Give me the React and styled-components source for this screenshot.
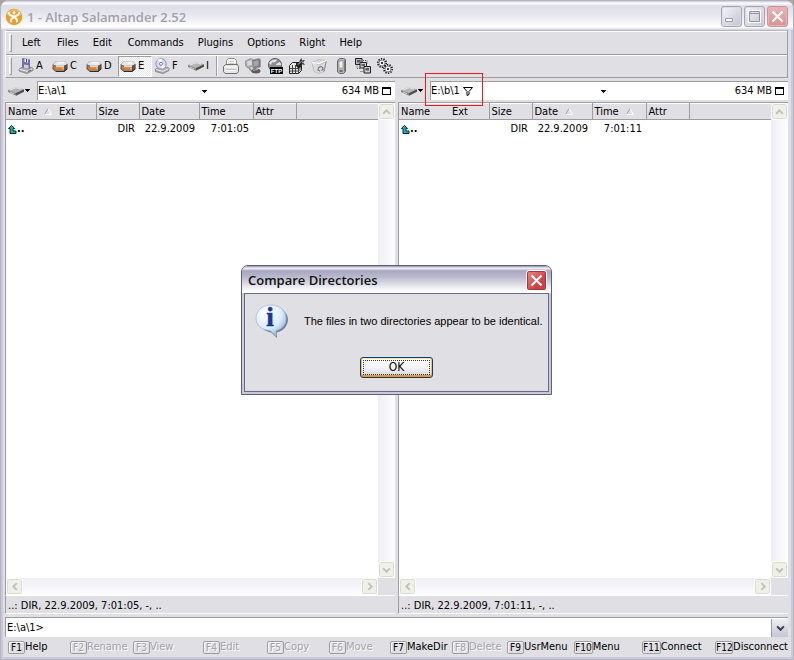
import styled, { createGlobalStyle, css } from "styled-components";

/* Silver theme palette and base type */
const GlobalStyles = createGlobalStyle`
	:root {
		--face: #E0DFE3;
		--shadow: #9D9DA1;
		--light: #FFFFFF;
		--frame: #C9C9D8;
		--disabled: #A3A2A8;
		--text: #000000;
		--ui-font: "DejaVu Sans Condensed", "DejaVu Sans", sans-serif;
		--title-font: "Open Sans", "Noto Sans", sans-serif;
	}

	* {
		box-sizing: border-box;
	}

	body {
		margin: 0;
		background: #A9A49E;
	}

	body, button, input {
		font-family: var(--ui-font);
		font-size: 11px;
		line-height: 16px;
		color: var(--text);
	}

	button {
		border: 0;
		padding: 0;
		background: none;
	}

	svg {
		display: block;
		flex: none;
	}
`;

/* Window frame */
const Window = styled.div`
	display: flex;
	flex-direction: column;
	min-height: 100vh;
	padding: 0 5px 2px 4px;
	background: var(--face);
	border: 1px solid #B4B3C2;
	border-radius: 8px 8px 0 0;
	box-shadow: inset 2px 0 0 var(--frame), inset -2px 0 0 var(--frame), inset 0 -2px 0 var(--frame);
`;

const TitleBar = styled.header`
	display: flex;
	align-items: center;
	gap: 2px;
	height: 29px;
	margin: 0 -5px 0 -4px;
	padding: 2px 5px 0 4px;
	border-radius: 7px 7px 0 0;
	background: linear-gradient(#CBCBDA, #FFFFFF 8%, #DEDEE9 16%, #E6E6EF 45%, #FFFFFF 90%, #D0D0DC);
`;

const Title = styled.h1`
	flex: 1;
	margin: 0 0 0 2px;
	font: 600 13px/20px var(--title-font);
	color: #A2A1A6;
`;

const CaptionButton = styled.button`
	display: grid;
	place-items: center;
	width: 21px;
	height: 21px;
	border: 1px solid ${({ $close }) => ($close ? "#C9939C" : "#A5A5B5")};
	border-radius: 3px;
	background: ${({ $close }) =>
		$close ? "linear-gradient(#E9B5B5, #D99292)" : "linear-gradient(135deg, #F4F4F8, #C3C3D0)"};
	box-shadow: inset 0 0 0 1px ${({ $close }) => ($close ? "#E7B4B5" : "#DCDCE6")};
`;

/* Menu and toolbar */
const Rebar = styled.div`
	border: 1px solid var(--shadow);
	border-left-color: var(--light);
	border-top-color: #B5B5BD;
`;

const Band = styled.div`
	display: flex;
	align-items: center;
	height: 23px;
	padding-left: 3px;
	border-top: 1px solid var(--light);

	& + & {
		border-top: 1px solid var(--shadow);
		box-shadow: inset 0 1px 0 var(--light);
	}
`;

const Gripper = styled.span`
	width: 3px;
	height: 18px;
	border: 1px solid var(--shadow);
	border-color: var(--light) var(--shadow) var(--shadow) var(--light);
`;

const MenuBar = styled.nav`
	display: flex;
	gap: 14px;
	padding-left: 10px;

	button {
		min-width: 21px;
		text-align: left;
	}
`;

const Drives = styled.div`
	display: flex;
	padding-left: 4px;
`;

const DriveButton = styled.button`
	display: flex;
	align-items: center;
	gap: 2px;
	width: ${({ $narrow }) => ($narrow ? 30 : 34)}px;
	height: 21px;
	padding-left: 1px;
	border: 1px solid transparent;
	${({ $pressed }) =>
		$pressed &&
		css`
			border-color: var(--shadow) var(--light) var(--light) var(--shadow);
			background: repeating-conic-gradient(#FFFFFF 0 25%, #E6E5E9 0 50%) 0 0 / 2px 2px;
		`}
`;

const Separator = styled.span`
	width: 2px;
	height: 20px;
	margin-right: 2px;
	border-left: 1px solid var(--shadow);
	border-right: 1px solid var(--light);
`;

const ToolButton = styled.button`
	display: grid;
	place-items: center;
	width: 22px;
	height: 21px;
`;

/* Panels */
const Panels = styled.main`
	flex: 1;
	display: grid;
	grid-template-columns: minmax(0, 1fr) minmax(0, 1fr);
	gap: 3px;
	margin-top: 3px;
`;

const Panel = styled.section`
	display: flex;
	flex-direction: column;
	min-width: 0;
`;

const PathBar = styled.div`
	display: flex;
	align-items: center;
	height: 19px;
`;

const DriveMenu = styled.button`
	display: flex;
	align-items: center;
	gap: 1px;
	width: 32px;
	padding-left: 3px;
`;

const PathField = styled.div`
	position: relative;
	flex: 1;
	display: flex;
	align-items: center;
	gap: 3px;
	height: 19px;
	padding-right: 4px;
	border-top: 1px solid var(--shadow);
	border-left: 1px solid var(--shadow);
	background: var(--light);
`;

const PathMenu = styled.button`
	display: grid;
	place-items: center;
	flex: 1;
	height: 16px;
`;

const Highlight = styled.span`
	position: absolute;
	left: -6px;
	top: -9px;
	width: 58px;
	height: 33px;
	border: 1px solid #F01818;
	pointer-events: none;
`;

const ListFrame = styled.div`
	flex: 1;
	display: grid;
	grid-template-columns: minmax(0, 1fr) 17px;
	grid-template-rows: 1fr 17px;
	margin-top: 2px;
	border-top: 1px solid var(--shadow);
	border-left: 1px solid var(--shadow);
	background: var(--face);
`;

const ListArea = styled.div`
	background: var(--light);
`;

const FileTable = styled.table`
	width: 100%;
	table-layout: fixed;
	border-collapse: collapse;

	thead tr {
		height: 17px;
		background: var(--face);
		box-shadow: inset 0 1px 0 var(--light), inset 0 -1px 0 var(--shadow);
	}

	th {
		padding: 0 0 0 2px;
		border-right: 1px solid var(--shadow);
		font-weight: normal;
		text-align: left;
	}

	th:last-child {
		border-right: 0;
	}

	td {
		height: 18px;
		padding: 0 4px 0 2px;
		text-align: right;
		white-space: nowrap;
	}

	td:first-child {
		text-align: left;
	}
`;

const Column = styled.col`
	width: ${({ $width }) => ($width ? `${$width}px` : "auto")};
`;

const HeadLabel = styled.span`
	display: inline-flex;
	align-items: center;
	gap: 7px;
	min-width: ${({ $wide }) => ($wide ? 51 : 0)}px;
	vertical-align: top;
`;

const UpDir = styled.span`
	display: flex;
	align-items: center;
	font-weight: bold;
`;

const ScrollBar = styled.div`
	display: flex;
	flex-direction: ${({ $vertical }) => ($vertical ? "column" : "row")};
	justify-content: space-between;
	background: linear-gradient(${({ $vertical }) => ($vertical ? "to right" : "to bottom")}, #EEEEF4, #FDFDFE);
`;

const ScrollButton = styled.button`
	display: grid;
	place-items: center;
	width: 17px;
	height: 17px;
	border: 1px solid #FFFFFF;
	border-radius: 3px;
	background: #F0F0EA;
	box-shadow: inset 0 0 0 1px #DCDCCE;
`;

const StatusLine = styled.div`
	height: 19px;
	padding: 2px 2px 0;
	border-top: 1px solid var(--light);
	border-bottom: 1px solid var(--light);
	border-left: 1px solid var(--shadow);
`;

/* Command line and function keys */
const CommandLine = styled.form`
	display: flex;
	align-items: center;
	height: 20px;
	margin-top: 3px;
	padding-left: 1px;
	border-top: 1px solid var(--shadow);
	border-left: 1px solid var(--shadow);
	background: var(--light);
`;

const CommandInput = styled.input`
	flex: 1;
	min-width: 0;
	border: 0;
	padding: 0 2px;
	outline: 0;
	background: none;
`;

const ComboButton = styled.button`
	display: grid;
	place-items: center;
	width: 17px;
	height: 18px;
	border-left: 1px solid var(--shadow);
	background: linear-gradient(#EEEEF4, #C5C5D4);
`;

const KeyBar = styled.footer`
	display: grid;
	grid-template-columns: 62fr 63fr 70fr 64fr 62fr 61fr 62fr 55fr 67fr 68fr 73fr 73fr;
	align-items: center;
	height: 20px;
	padding-left: 3px;
`;

const KeyButton = styled.button`
	display: flex;
	align-items: center;
	min-width: 0;
	white-space: nowrap;

	&:disabled {
		color: var(--disabled);
		text-shadow: 1px 1px 0 var(--light);
	}
`;

const KeyCap = styled.kbd`
	min-width: 17px;
	height: 13px;
	border: 1px solid var(--shadow);
	border-radius: 2px;
	box-shadow: inset 1px 1px 0 var(--light);
	font: 10px/11px var(--ui-font);
	text-align: center;
`;

/* Message box */
const Overlay = styled.div`
	position: fixed;
	inset: 0;
	display: grid;
	place-items: center;
	padding: 0 1px 1px 0;
`;

const Dialog = styled.section`
	width: 311px;
	padding: 0 2px 2px;
	border: 1px solid #5E5D80;
	border-radius: 7px 7px 0 0;
	background: #C9C9DA;
`;

const DialogTitle = styled.header`
	display: flex;
	align-items: center;
	justify-content: space-between;
	height: 27px;
	margin: 0 -2px;
	padding: 2px 4px 0 6px;
	border-radius: 6px 6px 0 0;
	background: linear-gradient(#8E8EA9, #F5F5FA 8%, #A6A6C0 18%, #B9B9CC 40%, #F4F4F8 85%, #FFFFFF);

	h2 {
		margin: 0;
		font: 600 13px/20px var(--title-font);
		color: #0E1010;
	}
`;

const DialogClose = styled(CaptionButton)`
	border-color: #FFFFFF;
	background: linear-gradient(135deg, #E58B84, #CC3F42 70%);
	box-shadow: inset 0 0 0 1px #A9333D;
`;

const DialogBody = styled.div`
	display: flex;
	flex-direction: column;
	align-items: center;
	border: 1px solid #6A6988;
	background: var(--face);
	padding: 9px 9px 13px;
`;

const Message = styled.div`
	display: flex;
	align-items: center;
	gap: 14px;
	align-self: stretch;
	height: 36px;
	margin-bottom: 18px;
	font-family: "Liberation Sans", Arial, sans-serif;

	p {
		margin: 0;
		white-space: nowrap;
	}
`;

const OkButton = styled.button`
	width: 73px;
	height: 21px;
	border: 1px solid #123C6B;
	border-radius: 3px;
	background: linear-gradient(#FFFFFF, #F4F4F8 50%, #D2D2E2);
	box-shadow: inset 0 1px 0 #FDE3A4, inset 0 -2px 0 #E79A1D, inset 1px 0 0 #F5BE56, inset -1px 0 0 #F5BE56;
	font-size: 12px;
	line-height: 17px;
	outline: 1px dotted #33334A;
	outline-offset: -4px;
`;

/* Icons */
const Icon = ({ size = 16, children }) => (
	<svg width={size} height={size} viewBox="0 0 16 16" fill="none" aria-hidden="true">
		{children}
	</svg>
);

const AppIcon = () => (
	<Icon size={18}>
		<circle cx="8" cy="8" r="7.3" fill="#EE9A28" />
		<path d="M2 6a6.5 6.5 0 0 1 12 0" stroke="#F9C05C" strokeWidth="1.4" />
		<path d="M3.5 4.5C3.5 6.5 5.500 7 8 7.500 10.500 7 12.500 6.500 12.500 4.500M8 8.500C5.500 9 5 10.500 5.500 12M8 8.500C10.500 9 11 10.500 10.500 12" stroke="#FFF" strokeWidth="1.8" strokeLinecap="round" />
		<circle cx="8" cy="4.3" r="1.4" fill="#FFF" />
	</Icon>
);

const FloppyIcon = () => (
	<Icon>
		<path d="M1 11l5-3 9 2v2.5L9 15.5 1 13z" fill="#A9A9AD" stroke="#727276" strokeWidth=".7" />
		<path d="M1.5 11.3l7.5 2 5.5-2.8" stroke="#F2F2F2" />
		<path d="M4 .5L5.500 0 12 1.500V11L4 9.500z" fill="#6F70AC" />
		<path d="M6.500 .5L10 1.300v3.200L6.500 4z" fill="#ECECF8" />
		<path d="M6 6.500l4.500 .8v3.200L6 9.700z" fill="#CFCFE0" />
		<path d="M8.500 1v3" stroke="#45457C" />
		<path d="M10 13.500l3-1.500" stroke="#555" />
	</Icon>
);

const DiskIcon = () => (
	<Icon>
		<path d="M.5 6.500L4 3h9l2.500 3v5L12 14H4L.5 11z" fill="#8E8A86" />
		<path d="M1 6.300L4.300 3.300H13L15.200 6 12 7.800H4z" fill="#E6E6E6" />
		<path d="M12 7.800L15.500 6v5L12 14z" fill="#55524F" />
		<path d="M1 6.500l3 1.300V14L.5 11z" fill="#6E6A67" />
		<path d="M4 8h8v1.500H4z" fill="#F4D3B0" />
		<path d="M4 9.500h8V12H4z" fill="#DA7F2E" />
		<path d="M2 8l2 1v3.500L2 11z" fill="#C87A3A" />
		<path d="M4 13.500h8l3-2.500" stroke="#2E2C2A" />
		<path d="M6 4.800h6" stroke="#FFF" />
		<path d="M10.500 10.500h1" stroke="#FFF2DC" strokeWidth="1.5" />
	</Icon>
);

const CdIcon = () => (
	<Icon>
		<path d="M1.500 11l5-3 8.500 2v2.500l-6 3-7.500-2z" fill="#A9A9AD" stroke="#727276" strokeWidth=".7" />
		<path d="M2 11.500l7 1.800 5.500-2.500" stroke="#F3F3F3" />
		<circle cx="7" cy="5.8" r="5.2" fill="#D4D9EF" stroke="#8E92AC" />
		<path d="M7 5.800L3.500 2A5 5 0 0 1 8 .8zM7 5.800l4.500 2.400A5 5 0 0 1 8 10.800z" fill="#FFF" />
		<circle cx="7" cy="5.8" r="1.5" fill="#FFF" stroke="#777C9D" />
	</Icon>
);

const RemovableIcon = () => (
	<Icon>
		<path d="M0 7l8-3 8 2.300L8 10z" fill="#B4B4B4" />
		<path d="M0 7v2l8 3.800V10z" fill="#858585" />
		<path d="M8 10l8-3.700v2.500l-8 4z" fill="#4E4E4E" />
		<path d="M2 7l6-2.300L13 6" stroke="#E9E9E9" />
		<path d="M2 9l4 1.800" stroke="#D5D5D5" />
	</Icon>
);

const PrinterIcon = () => (
	<Icon>
		<path d="M3.500 7.500v-5l2-2h6l2 2v5" fill="#F7F7F7" stroke="#8C8C8C" />
		<path d="M.5 8.500l2-2h12l1 2v5l-1.500 2h-12l-1.500-2z" fill="#E4E4E4" stroke="#6F6F6F" />
		<path d="M1.500 9h13M3 12.500h10" stroke="#FFF" />
		<path d="M3 11.500h10" stroke="#BDBDBD" />
		<path d="M6 3.500h5M5.500 5.500h6" stroke="#C9C9C9" />
	</Icon>
);

const NetworkIcon = () => (
	<Icon>
		<path d="M.5 3l5-2.500 3 1.500v6L3 10 .5 8z" fill="#A9A9A9" stroke="#8A8A8A" strokeWidth=".7" />
		<path d="M2 3.500l5-1.700v5L2.500 8z" fill="#D9D9D9" />
		<path d="M7 2l7-1.500 1.500 1V9L8 10.500z" fill="#7A7A7A" stroke="#999" strokeWidth=".7" />
		<path d="M8.500 3.300l5-1.200V7.500l-5 1.200z" fill="#A5A5A5" />
		<path d="M4 10l3 3.500h3V10" stroke="#8A8A8A" strokeWidth="1.5" />
		<ellipse cx="11" cy="13" rx="4.5" ry="2.5" fill="#5D5D5D" />
		<path d="M8 12.300l5-.8" stroke="#B5B5B5" />
	</Icon>
);

const FtpIcon = () => (
	<Icon>
		<circle cx="8" cy="7" r="6.6" fill="#8E8E8E" stroke="#4B4B4B" strokeWidth=".8" />
		<path d="M2 5c2-3 5-4 8-3.500L8.500 4 5 4.500 4 7zM9 6l4-2 1.500 3H9z" fill="#E3E3E3" />
		<path d="M3 9h13v7H3z" fill="#000" />
		<text x="9.5" y="14.8" textAnchor="middle" fontSize="6" fontWeight="bold" fontFamily="Liberation Sans, sans-serif" fill="#FFF">
			FTP
		</text>
	</Icon>
);

const ArchiveIcon = () => (
	<Icon>
		<path d="M.5 7.500l3-3h9v8l-3 3h-9z" fill="#E8E8E8" stroke="#222" />
		<path d="M3.500 7v8.500M6.500 7v8.500M.5 10.500H10M.5 13H10M9.500 7.500v8M9.500 10.500l3-3M9.500 13l3-3" stroke="#444" />
		<path d="M7 8V4l5 1v4l-2 2z" fill="#222" />
		<path d="M9 7.500L11 2l1.500-2L13 2.500l3-.5-2 2.500L16 7l-4-1z" fill="#333" />
		<path d="M9 6.500l3-3M13 3.500l1 1.500" stroke="#C9C9C9" />
	</Icon>
);

const RecycleIcon = () => (
	<Icon>
		<path d="M1 4.500L8 1.500l7.500 1L13 13.500 8 15.500 3 13.500z" fill="#DCDCDC" stroke="#B0B0B0" strokeWidth=".7" />
		<path d="M1 4.500l7 1.500 7.500-3.500" stroke="#FFF" strokeWidth="1.4" />
		<path d="M3 5l5 1.500 6-3-1 1.500-5 2.500z" fill="#B5B5B5" />
		<path d="M7 10.500l1.500-1.500 2.500-.5M11.500 9l.5 2.500-1.500 1M9 13l-2-.8V11" stroke="#6F6F6F" strokeWidth="1.2" />
		<path d="M15.200 3L13 13.500" stroke="#8C8C8C" />
	</Icon>
);

const PdaIcon = () => (
	<Icon>
		<path d="M4.500 3l2-2.500h4l2 1v12l-2 2h-4l-2-1.500z" fill="#B5B5B5" stroke="#6A6A6A" />
		<path d="M6 3h4v7H6z" fill="#F1F1F1" stroke="#8C8C8C" strokeWidth=".7" />
		<path d="M6.500 13h3" stroke="#555" strokeWidth="1.5" />
		<path d="M11.500 2.500v11" stroke="#777" />
	</Icon>
);

const ComputersIcon = () => (
	<Icon>
		<path d="M.5 .5h6.500v6H.5z" fill="#B9B9B9" stroke="#222" />
		<path d="M5 4.500h6.500v5.500H5z" fill="#C9C9C9" stroke="#222" />
		<path d="M9 8.500h6.500v6.500H9z" fill="#C9C9C9" stroke="#222" />
		<path d="M2 2h3.500v2.500H2zM6.500 6h3.500v2H6.500zM10.500 10H14v2.500h-3.500z" fill="#5E5E5E" />
		<path d="M2 6.500v4h3M8 2.500h4V6M5.500 13.500H9" stroke="#555" strokeDasharray="1 1" />
	</Icon>
);

const GearsIcon = () => (
	<Icon>
		<circle cx="5" cy="5" r="4.2" stroke="#111" strokeWidth="1.6" strokeDasharray="1.3 1.3" />
		<circle cx="5" cy="5" r="3" fill="#F4F4F4" stroke="#666" strokeWidth=".8" />
		<circle cx="11" cy="11" r="4.2" stroke="#111" strokeWidth="1.6" strokeDasharray="1.3 1.3" />
		<circle cx="11" cy="11" r="3" fill="#F4F4F4" stroke="#666" strokeWidth=".8" />
		<circle cx="5" cy="5" r="1" fill="#000" />
		<circle cx="11" cy="11" r="1" fill="#000" />
	</Icon>
);

const InfoIcon = () => (
	<svg width="36" height="36" viewBox="0 0 36 36" aria-hidden="true">
		<defs>
			<radialGradient id="bubble" cx=".35" cy=".25" r=".85">
				<stop offset="0" stopColor="#FFFFFF" />
				<stop offset=".6" stopColor="#DCEBFA" />
				<stop offset="1" stopColor="#7FAADC" />
			</radialGradient>
		</defs>
		<path d="M19 4c9 0 15 6 15 12.500S29 28 23 29.500V35l-6-5.500C9 28 5 23 5 17S10 4 19 4z" fill="#5D6485" opacity=".8" />
		<path d="M17 2c9 0 15 6 15 13s-4 11-10 12.500V33l-6-5.500C7 27 2 22 2 15S8 2 17 2z" fill="url(#bubble)" stroke="#A7B8D2" strokeWidth=".8" />
		<text x="16" y="23" textAnchor="middle" fontSize="27" fontWeight="bold" fontFamily="Liberation Serif, serif" fill="#17389A" stroke="#17389A" strokeWidth=".6">
			i
		</text>
	</svg>
);

const SmallArrow = () => (
	<svg width="5" height="3" viewBox="0 0 5 3" shapeRendering="crispEdges" aria-hidden="true">
		<path d="M0 0h5v1H4v1H3v1H2V2H1V1H0z" fill="#000" />
	</svg>
);

const BoxIcon = () => (
	<svg width="9" height="8" viewBox="0 0 9 8" shapeRendering="crispEdges" aria-hidden="true">
		<path d="M0 0h9v8H0zM1 2v5h7V2z" fill="#000" fillRule="evenodd" />
	</svg>
);

const FilterIcon = () => (
	<svg width="10" height="9" viewBox="0 0 10 9" fill="none" aria-hidden="true">
		<path d="M.5 .5h9L6 4.500v3L4 8.500v-4z" stroke="#000" />
	</svg>
);

const SortIcon = () => (
	<svg width="8" height="7" viewBox="0 0 8 7" fill="none" aria-hidden="true">
		<path d="M4 .5L.5 6.500" stroke="#9D9DA1" />
		<path d="M4 .5l3.500 6H.5" stroke="#FFF" />
	</svg>
);

const UpArrowIcon = () => (
	<svg width="9" height="9" viewBox="0 0 9 9" aria-hidden="true">
		<path d="M3.500 .5L.5 3.500H2v5h6V6H5V3.500h1.500z" fill="#18B8B0" stroke="#002828" />
	</svg>
);

const CHEVRONS = {
	up: "M1 6l3-3 3 3",
	down: "M1 3l3 3 3-3",
	left: "M6 1L3 4l3 3",
	right: "M3 1l3 3-3 3",
};

const Chevron = ({ dir, color = "#C3C2B9" }) => (
	<svg width="9" height="9" viewBox="0 0 8 8" fill="none" aria-hidden="true">
		<path d={CHEVRONS[dir]} stroke={color} strokeWidth="1.8" />
	</svg>
);

const CrossIcon = () => (
	<svg width="13" height="13" viewBox="0 0 13 13" aria-hidden="true">
		<path d="M1.500 1.500l10 10M11.500 1.500l-10 10" stroke="#FFF" strokeWidth="2" />
	</svg>
);

const MinimizeIcon = () => (
	<svg width="13" height="13" viewBox="0 0 13 13" aria-hidden="true">
		<path d="M.5 8.500h7v3h-7z" fill="#FFF" stroke="#9A9AAA" />
	</svg>
);

const MaximizeIcon = () => (
	<svg width="13" height="13" viewBox="0 0 13 13" fill="none" aria-hidden="true">
		<path d="M1 1h11v11H1z" stroke="#FFF" strokeWidth="2" />
		<path d="M1.500 1.500h10v10h-10zM2 3.500h9" stroke="#9292A2" />
	</svg>
);

/* Data */
const MENUS = ["Left", "Files", "Edit", "Commands", "Plugins", "Options", "Right", "Help"];

const DRIVES = [
	{ letter: "A", Glyph: FloppyIcon },
	{ letter: "C", Glyph: DiskIcon },
	{ letter: "D", Glyph: DiskIcon },
	{ letter: "E", Glyph: DiskIcon, pressed: true },
	{ letter: "F", Glyph: CdIcon },
	{ letter: "I", Glyph: RemovableIcon, narrow: true },
];

const TOOLS = [
	{ name: "Print", Glyph: PrinterIcon },
	{ name: "Network", Glyph: NetworkIcon },
	{ name: "FTP", Glyph: FtpIcon },
	{ name: "Registry", Glyph: ArchiveIcon },
	{ name: "Recycle Bin", Glyph: RecycleIcon },
	{ name: "Mobile device", Glyph: PdaIcon },
	{ name: "Computers", Glyph: ComputersIcon },
	{ name: "Settings", Glyph: GearsIcon },
];

const KEYS = [
	["F1", "Help", true],
	["F2", "Rename"],
	["F3", "View"],
	["F4", "Edit"],
	["F5", "Copy"],
	["F6", "Move"],
	["F7", "MakeDir", true],
	["F8", "Delete"],
	["F9", "UsrMenu", true],
	["F10", "Menu", true],
	["F11", "Connect", true],
	["F12", "Disconnect", true],
];

const Scroll = ({ vertical }) => (
	<ScrollBar $vertical={vertical}>
		<ScrollButton aria-label={vertical ? "Scroll up" : "Scroll left"}>
			<Chevron dir={vertical ? "up" : "left"} />
		</ScrollButton>
		<ScrollButton aria-label={vertical ? "Scroll down" : "Scroll right"}>
			<Chevron dir={vertical ? "down" : "right"} />
		</ScrollButton>
	</ScrollBar>
);

const FilePanel = ({ path, time, sorted, filtered }) => (
	<Panel>
		<PathBar>
			<DriveMenu aria-label="Change drive">
				<RemovableIcon />
				<SmallArrow />
			</DriveMenu>
			<PathField>
				<span>{path}</span>
				{filtered && <FilterIcon />}
				<PathMenu aria-label="Directory history">
					<SmallArrow />
				</PathMenu>
				<span>634 MB</span>
				<button aria-label="Zoom panel">
					<BoxIcon />
				</button>
				{filtered && <Highlight />}
			</PathField>
		</PathBar>
		<ListFrame>
			<ListArea>
				<FileTable>
					<colgroup>
						<Column $width={90} />
						<Column $width={43} />
						<Column $width={60} />
						<Column $width={54} />
						<Column $width={43} />
						<Column />
					</colgroup>
					<thead>
						<tr>
							<th>
								<HeadLabel $wide>
									Name
									{sorted.includes("Name") && <SortIcon />}
								</HeadLabel>
								<HeadLabel>Ext</HeadLabel>
							</th>
							{["Size", "Date", "Time", "Attr"].map((name) => (
								<th key={name}>
									<HeadLabel>
										{name}
										{sorted.includes(name) && <SortIcon />}
									</HeadLabel>
								</th>
							))}
							<th />
						</tr>
					</thead>
					<tbody>
						<tr>
							<td>
								<UpDir>
									<UpArrowIcon />
									..
								</UpDir>
							</td>
							<td>DIR</td>
							<td>22.9.2009</td>
							<td>{time}</td>
							<td />
							<td />
						</tr>
					</tbody>
				</FileTable>
			</ListArea>
			<Scroll vertical />
			<Scroll />
		</ListFrame>
		<StatusLine>..: DIR, 22.9.2009, {time}, -, ..</StatusLine>
	</Panel>
);

const CompareDialog = () => (
	<Overlay>
		<Dialog role="dialog" aria-labelledby="compare-title">
			<DialogTitle>
				<h2 id="compare-title">Compare Directories</h2>
				<DialogClose $close aria-label="Close dialog">
					<CrossIcon />
				</DialogClose>
			</DialogTitle>
			<DialogBody>
				<Message>
					<InfoIcon />
					<p>The files in two directories appear to be identical.</p>
				</Message>
				<OkButton>OK</OkButton>
			</DialogBody>
		</Dialog>
	</Overlay>
);

export default function App() {
	return (
		<>
			<GlobalStyles />
			<Window>
				<TitleBar>
					<AppIcon />
					<Title>1 - Altap Salamander 2.52</Title>
					<CaptionButton aria-label="Minimize">
						<MinimizeIcon />
					</CaptionButton>
					<CaptionButton aria-label="Maximize">
						<MaximizeIcon />
					</CaptionButton>
					<CaptionButton $close aria-label="Close">
						<CrossIcon />
					</CaptionButton>
				</TitleBar>
				<Rebar>
					<Band>
						<Gripper />
						<MenuBar>
							{MENUS.map((menu) => (
								<button key={menu}>{menu}</button>
							))}
						</MenuBar>
					</Band>
					<Band>
						<Gripper />
						<Drives>
							{DRIVES.map(({ letter, Glyph, pressed, narrow }) => (
								<DriveButton key={letter} $pressed={pressed} $narrow={narrow}>
									<Glyph />
									{letter}
								</DriveButton>
							))}
						</Drives>
						<Separator />
						{TOOLS.map(({ name, Glyph }) => (
							<ToolButton key={name} aria-label={name}>
								<Glyph />
							</ToolButton>
						))}
					</Band>
				</Rebar>
				<Panels>
					<FilePanel path="E:\a\1" time="7:01:05" sorted={["Name"]} />
					<FilePanel path="E:\b\1" time="7:01:11" sorted={["Date", "Time"]} filtered />
				</Panels>
				<CommandLine>
					<label htmlFor="command">E:\a\1&gt;</label>
					<CommandInput id="command" autoComplete="off" />
					<ComboButton type="button" aria-label="Command history">
						<Chevron dir="down" color="#3B3B4B" />
					</ComboButton>
				</CommandLine>
				<KeyBar>
					{KEYS.map(([cap, label, enabled]) => (
						<KeyButton key={cap} disabled={!enabled}>
							<KeyCap>{cap}</KeyCap>
							{label}
						</KeyButton>
					))}
				</KeyBar>
			</Window>
			<CompareDialog />
		</>
	);
}
